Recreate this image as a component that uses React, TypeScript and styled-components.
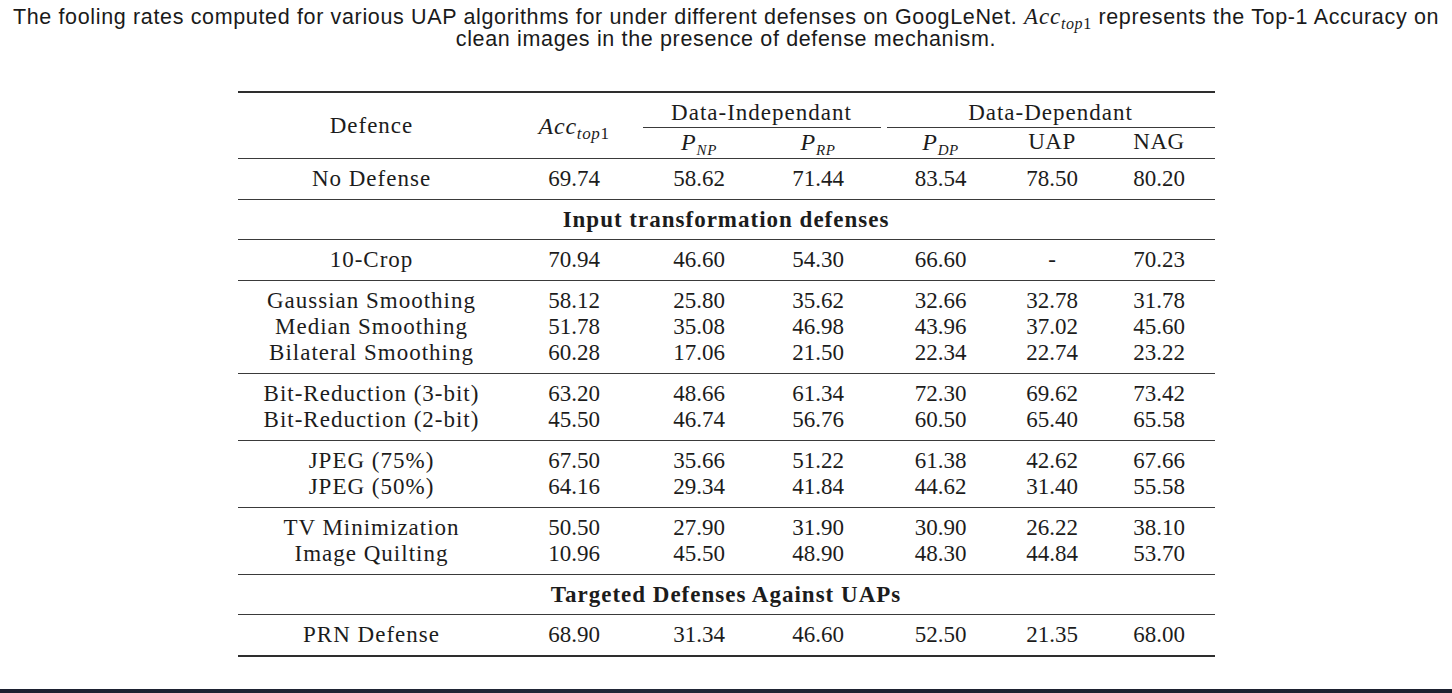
import React from "react";
import styled, { createGlobalStyle } from "styled-components";

const GlobalStyle = createGlobalStyle`
  html, body { margin: 0; padding: 0; background: #ffffff; }
  body { font-family: "Liberation Serif", serif; color: #111; }
`;

const COLS = "268px 137px 113px 125px 120px 103px 111px";

const Page = styled.div`
  display: flex;
  flex-direction: column;
  min-height: 100vh;
  background: #fff;
`;

const Main = styled.main`
  flex: 1;
  display: flex;
  flex-direction: column;
  align-items: center;
`;

const Caption = styled.p`
  margin: 6px 0 0;
  padding: 0 4px;
  font-family: "Liberation Sans", Arial, sans-serif;
  font-size: 21.5px;
  letter-spacing: 0.65px;
  line-height: 22px;
  text-align: center;
  color: #1a1a1a;
  white-space: nowrap;
`;

const MathI = styled.span<{ $size?: number }>`
  font-family: "Liberation Serif", serif;
  font-style: italic;
  ${(p) => (p.$size ? `font-size: ${p.$size}px;` : "")}
  letter-spacing: 0.8px;
`;

const Sub = styled.sub<{ $size?: number }>`
  font-size: ${(p) => p.$size ?? 14}px;
  vertical-align: baseline;
  position: relative;
  top: 0.3em;
  line-height: 0;
  letter-spacing: 0.6px;
`;

const Upright = styled.span`
  font-style: normal;
`;

const Table = styled.div`
  margin-top: 41px;
  width: 977px;
  display: flex;
  flex-direction: column;
  font-family: "Liberation Serif", serif;
  font-size: 23px;
  color: #1c1c1c;
  border-top: 2px solid #2e2e2e;
  border-bottom: 2px solid #2e2e2e;
`;

const Header = styled.div`
  display: grid;
  grid-template-columns: ${COLS};
  grid-template-rows: auto auto;
`;

const HeadCell = styled.div<{ $col: string; $row: string; $rule?: boolean; $trimL?: number }>`
  grid-column: ${(p) => p.$col};
  grid-row: ${(p) => p.$row};
  display: flex;
  align-items: center;
  justify-content: center;
  line-height: 26px;
  white-space: nowrap;
  letter-spacing: 1px;
  ${(p) =>
    p.$rule
      ? `padding: 7px 0 1px; margin-left: ${p.$trimL ?? 0}px; border-bottom: 1px solid #3a3a3a;`
      : ""}
`;

const SubHead = styled.div<{ $col: number }>`
  grid-column: ${(p) => p.$col};
  grid-row: 2;
  text-align: center;
  line-height: 26px;
  padding: 1px 0 2px;
  white-space: nowrap;
  letter-spacing: 0.5px;
`;

const Group = styled.div<{ $section?: boolean }>`
  border-top: 1px solid #3a3a3a;
  padding: ${(p) => (p.$section ? "7px 0 6px" : "7px 0")};
  display: flex;
  flex-direction: column;
`;

const Row = styled.div`
  display: grid;
  grid-template-columns: ${COLS};
  line-height: 26px;
`;

const Cell = styled.div`
  text-align: center;
  white-space: nowrap;
`;

const Label = styled(Cell)`
  letter-spacing: 1px;
`;

const Section = styled.div`
  text-align: center;
  font-weight: bold;
  line-height: 26px;
  letter-spacing: 1px;
`;

const BottomBar = styled.div`
  height: 4px;
  background: linear-gradient(90deg, #1c2030 0%, #222838 45%, #1e2231 60%, #1d2130 100%);
`;

type R = [string, string, string, string, string, string, string];

const groups: (R[] | string)[] = [
  [["No Defense", "69.74", "58.62", "71.44", "83.54", "78.50", "80.20"]],
  "Input transformation defenses",
  [["10-Crop", "70.94", "46.60", "54.30", "66.60", "-", "70.23"]],
  [
    ["Gaussian Smoothing", "58.12", "25.80", "35.62", "32.66", "32.78", "31.78"],
    ["Median Smoothing", "51.78", "35.08", "46.98", "43.96", "37.02", "45.60"],
    ["Bilateral Smoothing", "60.28", "17.06", "21.50", "22.34", "22.74", "23.22"],
  ],
  [
    ["Bit-Reduction (3-bit)", "63.20", "48.66", "61.34", "72.30", "69.62", "73.42"],
    ["Bit-Reduction (2-bit)", "45.50", "46.74", "56.76", "60.50", "65.40", "65.58"],
  ],
  [
    ["JPEG (75%)", "67.50", "35.66", "51.22", "61.38", "42.62", "67.66"],
    ["JPEG (50%)", "64.16", "29.34", "41.84", "44.62", "31.40", "55.58"],
  ],
  [
    ["TV Minimization", "50.50", "27.90", "31.90", "30.90", "26.22", "38.10"],
    ["Image Quilting", "10.96", "45.50", "48.90", "48.30", "44.84", "53.70"],
  ],
  "Targeted Defenses Against UAPs",
  [["PRN Defense", "68.90", "31.34", "46.60", "52.50", "21.35", "68.00"]],
];

const AccTop1: React.FC<{ size: number; sub: number }> = ({ size, sub }) => (
  <MathI $size={size}>
    Acc
    <Sub $size={sub}>
      top<Upright>1</Upright>
    </Sub>
  </MathI>
);

const PSub: React.FC<{ s: string }> = ({ s }) => (
  <MathI $size={24}>
    P<Sub $size={15}>{s}</Sub>
  </MathI>
);

export default function App() {
  return (
    <Page>
      <GlobalStyle />
      <Main>
        <Caption>
          The fooling rates computed for various UAP algorithms for under different defenses on GoogLeNet.{" "}
          <AccTop1 size={23} sub={16} /> represents the Top-1 Accuracy on
          <br />
          clean images in the presence of defense mechanism.
        </Caption>
        <Table>
          <Header>
            <HeadCell $col="1" $row="1 / 3">Defence</HeadCell>
            <HeadCell $col="2" $row="1 / 3">
              <AccTop1 size={24} sub={17} />
            </HeadCell>
            <HeadCell $col="3 / 5" $row="1" $rule>
              Data-Independant
            </HeadCell>
            <HeadCell $col="5 / 8" $row="1" $rule $trimL={6}>
              Data-Dependant
            </HeadCell>
            <SubHead $col={3}>
              <PSub s="NP" />
            </SubHead>
            <SubHead $col={4}>
              <PSub s="RP" />
            </SubHead>
            <SubHead $col={5}>
              <PSub s="DP" />
            </SubHead>
            <SubHead $col={6}>UAP</SubHead>
            <SubHead $col={7}>NAG</SubHead>
          </Header>
          {groups.map((g, i) =>
            typeof g === "string" ? (
              <Group key={i} $section>
                <Section>{g}</Section>
              </Group>
            ) : (
              <Group key={i}>
                {g.map((r) => (
                  <Row key={r[0]}>
                    <Label>{r[0]}</Label>
                    {r.slice(1).map((v, j) => (
                      <Cell key={j}>{v}</Cell>
                    ))}
                  </Row>
                ))}
              </Group>
            )
          )}
        </Table>
      </Main>
      <BottomBar />
    </Page>
  );
}
